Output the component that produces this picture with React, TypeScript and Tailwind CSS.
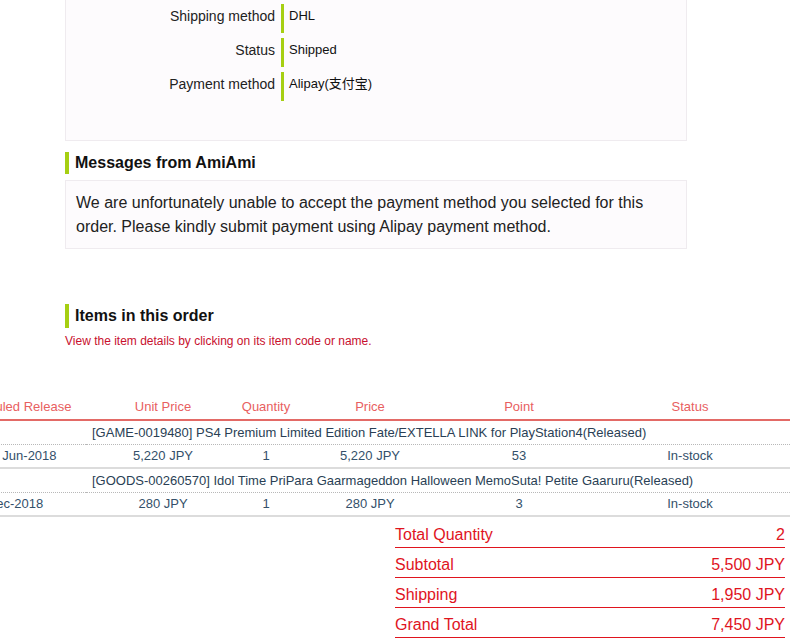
import React from "react";

const rows = [
  { label: "Shipping method", value: "DHL" },
  { label: "Status", value: "Shipped" },
  { label: "Payment method", value: "Alipay(支付宝)" },
];

const items = [
  {
    name: "[GAME-0019480] PS4 Premium Limited Edition Fate/EXTELLA LINK for PlayStation4(Released)",
    release: "Late Jun-2018",
    unit: "5,220 JPY",
    qty: "1",
    price: "5,220 JPY",
    point: "53",
    status: "In-stock",
  },
  {
    name: "[GOODS-00260570] Idol Time PriPara Gaarmageddon Halloween MemoSuta! Petite Gaaruru(Released)",
    release: "Dec-2018",
    unit: "280 JPY",
    qty: "1",
    price: "280 JPY",
    point: "3",
    status: "In-stock",
  },
];

const totals = [
  ["Total Quantity", "2"],
  ["Subtotal", "5,500 JPY"],
  ["Shipping", "1,950 JPY"],
  ["Grand Total", "7,450 JPY"],
];

export default function App() {
  return (
    <div
      className="relative w-[803px] h-[641px] overflow-hidden bg-white text-[#222]"
      style={{ fontFamily: '"Liberation Sans", Arial, "Noto Sans CJK SC", sans-serif' }}
    >
      <div className="ml-[65px] w-[622px]">
        <div className="-mt-[20px] border border-[#efebef] bg-[#fdfbfd] pt-[23px] pb-[39px] flex flex-col gap-[5px]">
          {rows.map((r) => (
            <div key={r.label} className="flex h-[29px]">
              <div className="w-[209px] text-right text-[14px] leading-[24px] text-[#222]">{r.label}</div>
              <div className="ml-[6px] w-[3px] h-[29px] bg-[#a6cf12]" />
              <div className="pl-[5px] text-[13px] leading-[24px] text-[#111]">{r.value}</div>
            </div>
          ))}
        </div>

        <div className="mt-[11px] flex items-center">
          <div className="w-[4px] h-[22px] bg-[#a6cf12]" />
          <div className="ml-[6px] text-[16px] font-bold leading-[22px] text-[#111]">Messages from AmiAmi</div>
        </div>
        <div className="mt-[6px] border border-[#efebef] bg-[#fdfbfd] px-[10px] pt-[10px] pb-[9px] text-[16px] leading-[24px] text-[#222]">
          We are unfortunately unable to accept the payment method you selected for this order. Please kindly submit payment using Alipay payment method.
        </div>

        <div className="mt-[55px] flex items-center">
          <div className="w-[4px] h-[24px] bg-[#a6cf12]" />
          <div className="ml-[6px] text-[16px] font-bold leading-[24px] text-[#111]">Items in this order</div>
        </div>
        <div className="mt-[5px] text-[12px] leading-[16px] text-[#c8102e]">
          View the item details by clicking on its item code or name.
        </div>
      </div>

      <table className="mt-[43px] ml-[-56px] w-[846px] table-fixed border-separate border-spacing-0 text-[13px]">
        <colgroup>
          <col className="w-[142px]" />
          <col className="w-[154px]" />
          <col className="w-[52px]" />
          <col className="w-[156px]" />
          <col className="w-[142px]" />
          <col className="w-[200px]" />
        </colgroup>
        <thead>
          <tr className="text-[#e8605f]">
            {["Scheduled Release", "Unit Price", "Quantity", "Price", "Point", "Status"].map((h) => (
              <th
                key={h}
                className="pt-[6px] pb-[3px] leading-[18px] font-normal text-center whitespace-nowrap border-b-2 border-[#e36a66]"
              >
                {h}
              </th>
            ))}
          </tr>
        </thead>
        <tbody>
          {items.map((it) => (
            <React.Fragment key={it.name}>
              <tr>
                <td className="h-[23px] leading-[23px] border-b border-dotted border-[#b8b8b8]" />
                <td
                  colSpan={5}
                  className="h-[23px] leading-[23px] pl-[6px] whitespace-nowrap text-[#2a3f55] border-b border-dotted border-[#b8b8b8]"
                >
                  {it.name}
                </td>
              </tr>
              <tr className="text-[#34506a]">
                {[it.release, it.unit, it.qty, it.price, it.point, it.status].map((v, i) => (
                  <td
                    key={i}
                    className="h-[22px] leading-[22px] text-center whitespace-nowrap border-b-2 border-[#dcdcdc]"
                  >
                    {v}
                  </td>
                ))}
              </tr>
            </React.Fragment>
          ))}
        </tbody>
      </table>

      <div className="mt-[1px] ml-[395px] w-[390px] text-[16px] text-[#e0141e]">
        {totals.map(([k, v]) => (
          <div key={k} className="flex justify-between pt-[4px] h-[30px] leading-[25px] border-b border-[#e0141e]">
            <span>{k}</span>
            <span>{v}</span>
          </div>
        ))}
      </div>
    </div>
  );
}
